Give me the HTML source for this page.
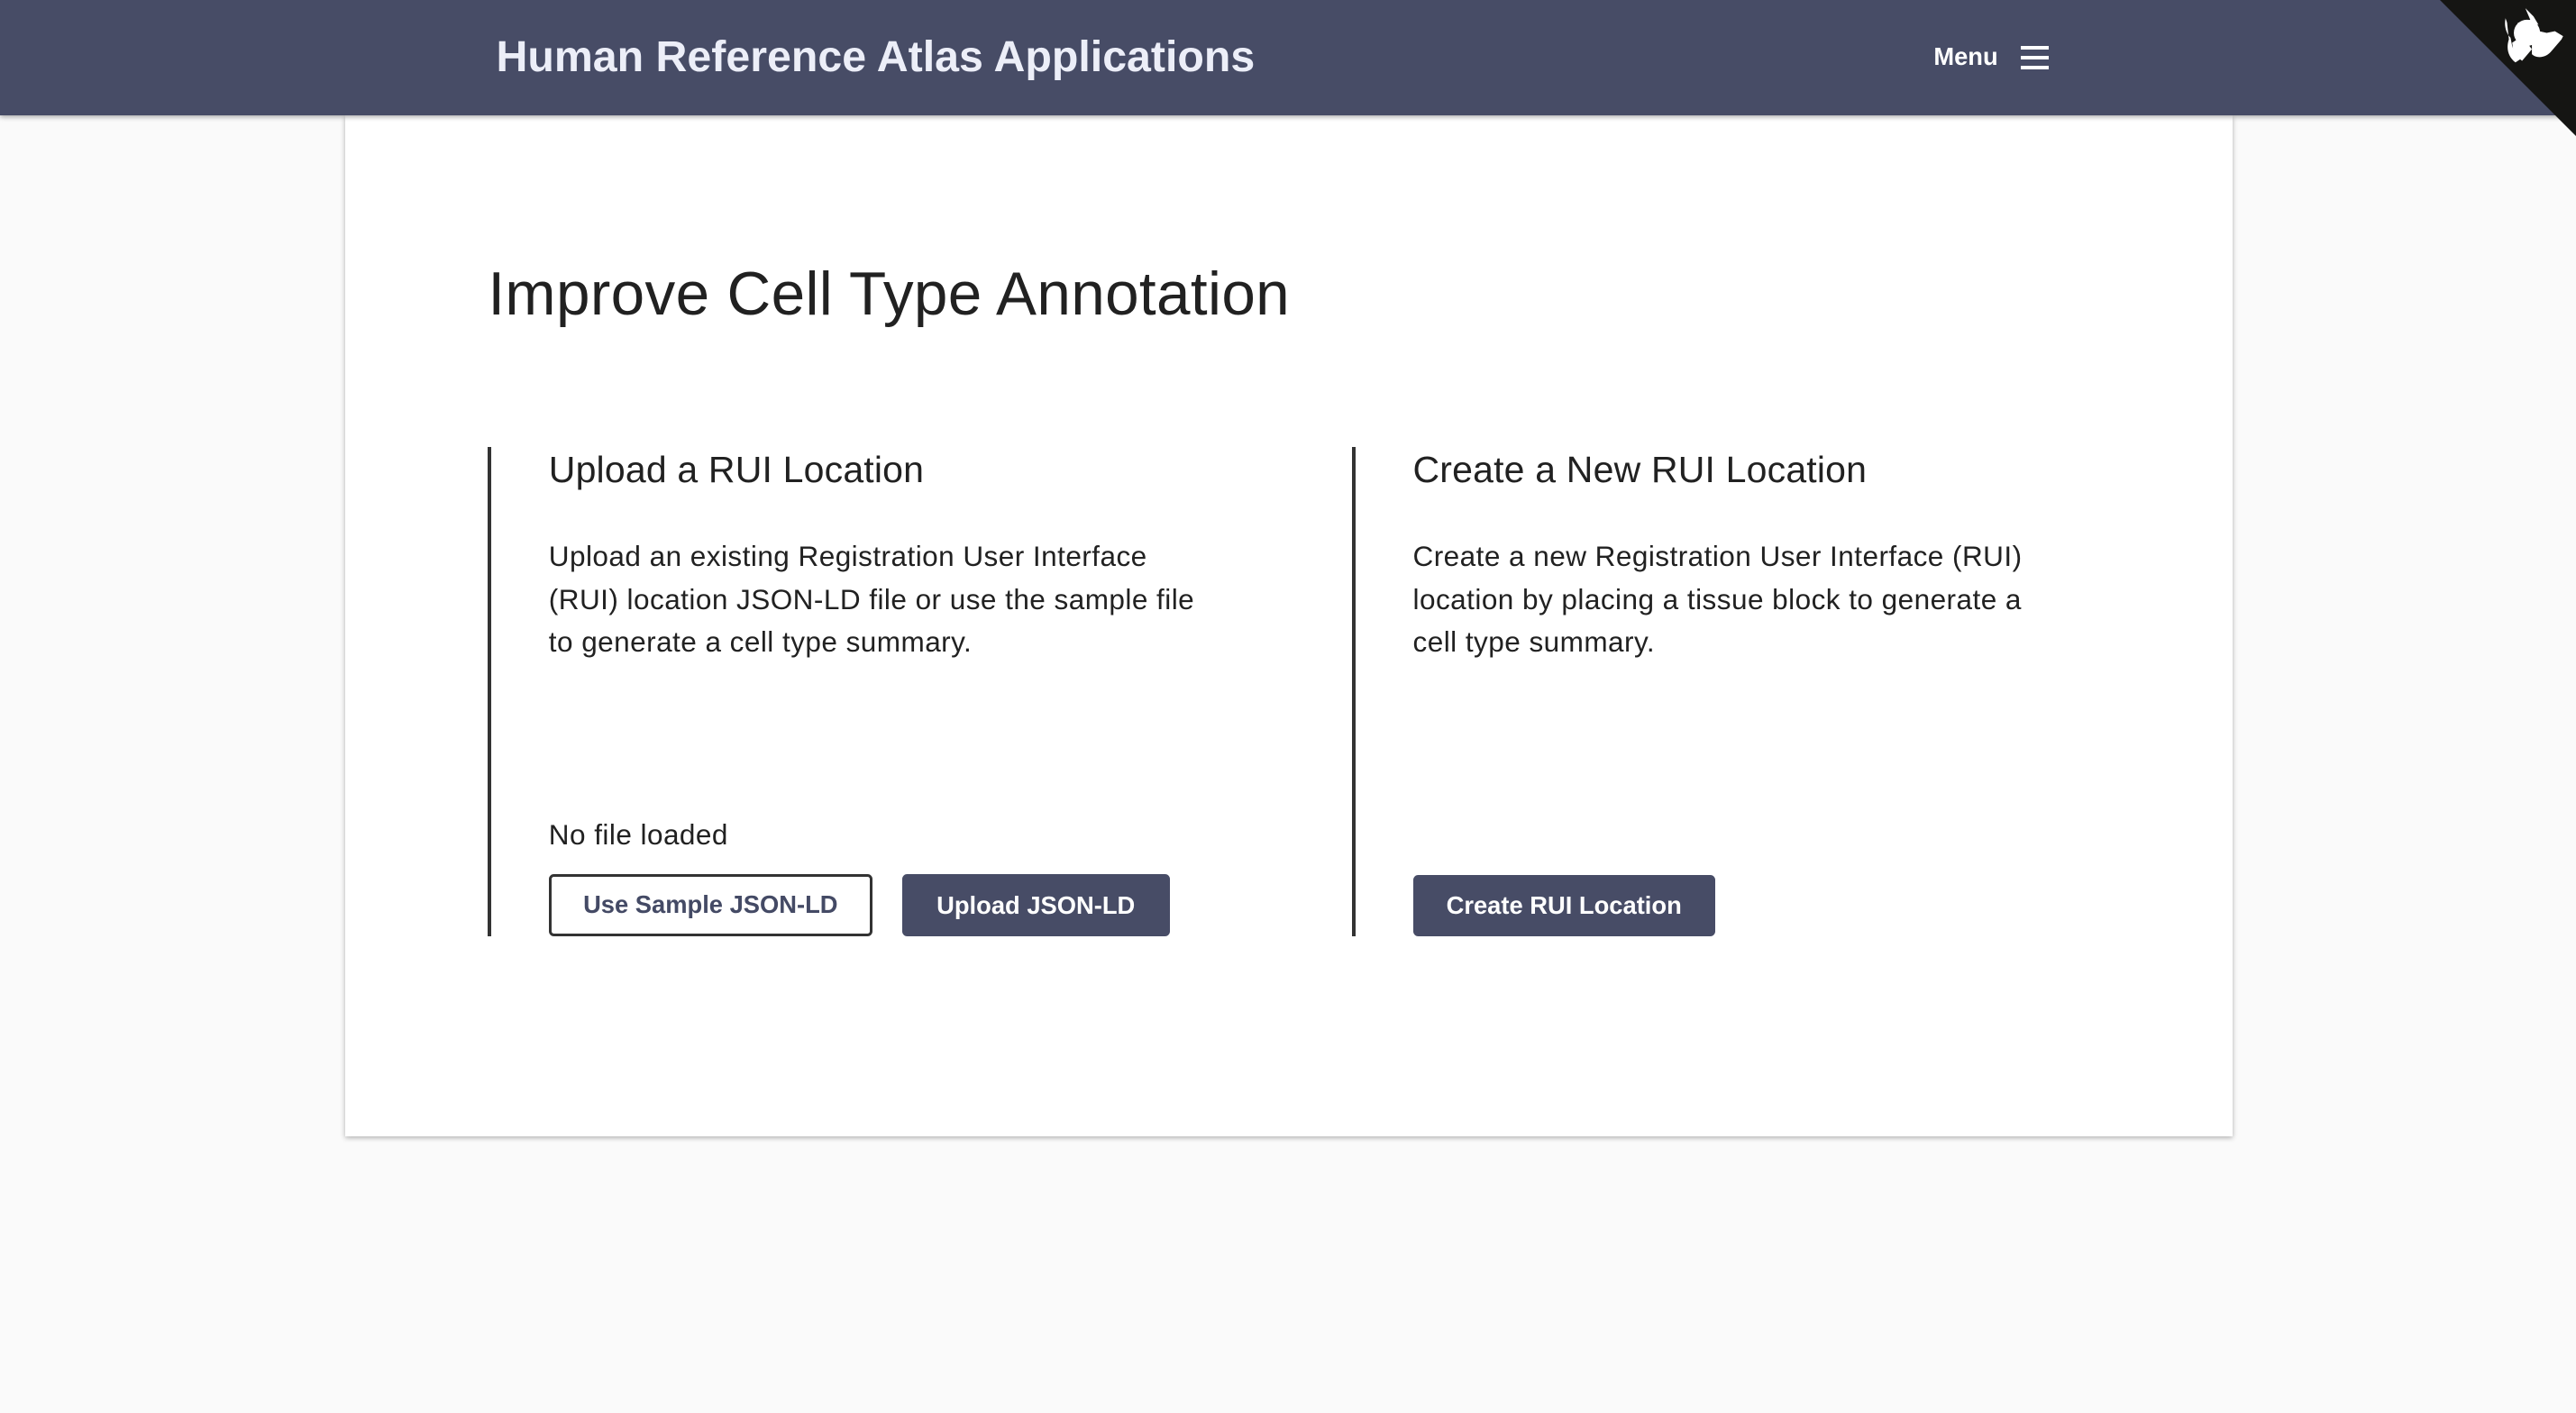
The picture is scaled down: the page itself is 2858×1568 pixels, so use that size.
<!DOCTYPE html>
<html><head><meta charset="utf-8"><style>
html,body{margin:0;padding:0}
body{width:1568px;height:860px;overflow:hidden;zoom:1.82270;background:#fafafa;font-family:"Liberation Sans",Arial,sans-serif;position:relative;color:#212121}
.a{position:absolute;white-space:nowrap}
header{position:absolute;left:0;top:0;width:1568px;height:70px;background:#474c66;box-shadow:0 1px 3px rgba(0,0,0,.35);z-index:2}
.card{position:absolute;left:210px;top:70px;width:1149px;height:622px;background:#fff;box-shadow:0 1px 3px rgba(0,0,0,.3)}
.vl{position:absolute;width:2px;background:#333;top:272px;height:298px}
.p{font-size:17.3px;line-height:26px;letter-spacing:0.25px}
.btn{position:absolute;box-sizing:border-box;border-radius:3px;font-weight:bold;font-size:15px;text-align:center;line-height:38px;height:38px}
</style></head><body>
<header>
<div class="a" style="left:302px;top:19px;font-size:26.5px;font-weight:bold;color:#eceef8;letter-spacing:0px">Human Reference Atlas Applications</div>
<div class="a" style="left:1177px;top:26px;font-size:15px;font-weight:bold;color:#fff">Menu</div>
<div class="a" style="left:1230px;top:28px;width:17px;height:2px;background:#fff"></div>
<div class="a" style="left:1230px;top:34px;width:17px;height:2px;background:#fff"></div>
<div class="a" style="left:1230px;top:40px;width:17px;height:2px;background:#fff"></div>
</header>
<svg class="a" style="left:1485px;top:0;z-index:3" width="83" height="83" viewBox="0 0 83 83">
<polygon points="0,0 83,0 83,83" fill="#151513"/>
<path d="M46 38 C42 35 40 30 42 24 L41 15 C41 13 40 12 40 11 C39 15 40 20 43 23 L44 28 C45 31 47 33 49 36 Z" fill="#fff"/>
<circle cx="53" cy="20" r="8" fill="#fff"/>
<path d="M47 14 L55 12 L52 5 L53 6 L57 10 L60 15 Z" fill="#fff"/>
<path d="M56 18 L65 20 L70 19 L75 22 L74 24 L68 31 C65 35 59 36 56 33 Z" fill="#fff"/>
<path d="M44 26 L50 22 L56 30 L50 37 L45 33 Z" fill="#fff"/>
</svg>
<div class="card"></div>
<div class="a" style="left:297px;top:158px;font-size:37px;color:#212121;letter-spacing:0.2px">Improve Cell Type Annotation</div>
<div class="vl" style="left:297px"></div>
<div class="vl" style="left:823px"></div>
<div class="a" style="left:334px;top:273px;font-size:22.5px;letter-spacing:0.1px">Upload a RUI Location</div>
<div class="a p" style="left:334px;top:326px">Upload an existing Registration User Interface<br>(RUI) location JSON-LD file or use the sample file<br>to generate a cell type summary.</div>
<div class="a" style="left:334px;top:498px;font-size:17.3px;letter-spacing:0.25px">No file loaded</div>
<div class="btn" style="left:334px;top:532px;width:197px;border:2px solid #333;background:#fff;color:#444a65;line-height:34px">Use Sample JSON-LD</div>
<div class="btn" style="left:549px;top:532px;width:163px;background:#474c66;color:#fff">Upload JSON-LD</div>
<div class="a" style="left:860px;top:273px;font-size:22.5px;letter-spacing:0.1px">Create a New RUI Location</div>
<div class="a p" style="left:860px;top:326px">Create a new Registration User Interface (RUI)<br>location by placing a tissue block to generate a<br>cell type summary.</div>
<div class="btn" style="left:860px;top:533px;width:184px;height:37px;line-height:37px;background:#474c66;color:#fff">Create RUI Location</div>
</body></html>
